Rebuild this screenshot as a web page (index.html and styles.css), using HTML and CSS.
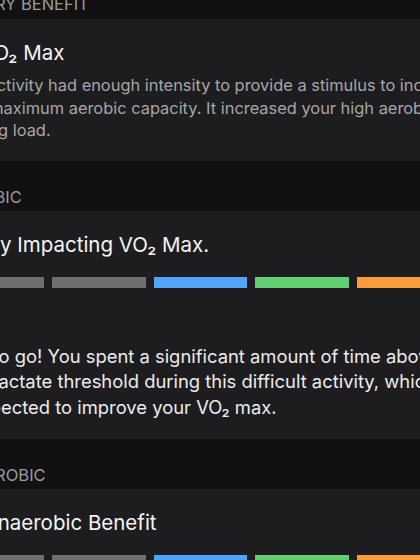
FILE: index.html
```html
<!DOCTYPE html>
<html lang="en">
<head>
  <meta charset="UTF-8">
  <meta name="viewport" content="width=device-width, initial-scale=1.0">
  <title>Training Effect</title>
  <link rel="stylesheet" href="styles.css">
</head>
<body>

  <div class="screen">
    <div class="section-head first">PRIMARY BENEFIT</div>
    <div class="card">
      <div class="title">
        <svg class="icon" width="24" height="24" viewBox="0 0 24 24">
          <circle cx="12" cy="12" r="10" fill="none" stroke="#52a5f5" stroke-width="2"/>
          <path d="M7 13l3-4 3 4 4-5" fill="none" stroke="#52a5f5" stroke-width="2"/>
        </svg>VO₂ Max
      </div>
      <p class="note">This activity had enough intensity to provide a stimulus to increase<br>your maximum aerobic capacity. It increased your high aerobic<br>training load.</p>
    </div>

    <div class="section-head">AEROBIC</div>
    <div class="card">
      <div class="title">Highly Impacting VO₂ Max.</div>
      <div class="scale">
        <span class="seg grey"></span>
        <span class="seg grey"></span>
        <span class="seg blue"></span>
        <span class="seg green"></span>
        <span class="seg orange"></span>
      </div>
      <p class="desc">Way to go! You spent a significant amount of time above<br>your lactate threshold during this difficult activity, which<br>is expected to improve your VO₂ max.</p>
    </div>

    <div class="section-head">ANAEROBIC</div>
    <div class="card">
      <div class="title">No Anaerobic Benefit</div>
      <div class="scale">
        <span class="seg grey"></span>
        <span class="seg grey"></span>
        <span class="seg blue"></span>
        <span class="seg green"></span>
        <span class="seg orange"></span>
      </div>
      <p class="desc">This activity did not include enough intense efforts to<br>improve your anaerobic capacity.</p>
    </div>
  </div>

</body>
</html>
```

FILE: styles.css
```css
html, body {
    margin: 0;
    background-color: #111112;
    overflow: hidden;
}
body {
    width: 420px;
    height: 560px;
    font-family: Inter, "Noto Sans", "DejaVu Sans", sans-serif;
    -webkit-font-smoothing: antialiased;
}

/* the list is wider than the window, only its middle shows */
.screen {
    width: 533px;
    margin-left: -66px;
}

.section-head {
    padding: 26px 16px 4.5px;
    font-size: 16.5px;
    line-height: 20px;
    color: #999a9c;
    white-space: nowrap;
}
.section-head.first {
    margin-top: -32px;
    padding-left: 9px;
}

.card {
    background-color: #1d1d1f;
    padding: 21px 16px 18.5px;
}

.title {
    display: flex;
    align-items: center;
    font-size: 20.5px;
    line-height: 26px;
    color: #f4f4f4;
    white-space: nowrap;
}
.icon {
    margin-right: 6px;
}

.note, .desc {
    margin: 0;
    white-space: nowrap;
}
.note {
    margin-top: 8.3px;
    font-size: 16.4px;
    line-height: 22.8px;
    color: #a6a6a8;
}
.desc {
    margin-top: 56.5px;
    font-size: 18.4px;
    line-height: 25.3px;
    color: #ebebeb;
}

.scale {
    display: flex;
    gap: 8px;
    margin-top: 19px;
}
.seg {
    flex: 1;
    height: 10.5px;
}
.grey   { background-color: #6f6f70; }
.blue   { background-color: #51a4f6; }
.green  { background-color: #62cf72; }
.orange { background-color: #f89d3c; }
```
